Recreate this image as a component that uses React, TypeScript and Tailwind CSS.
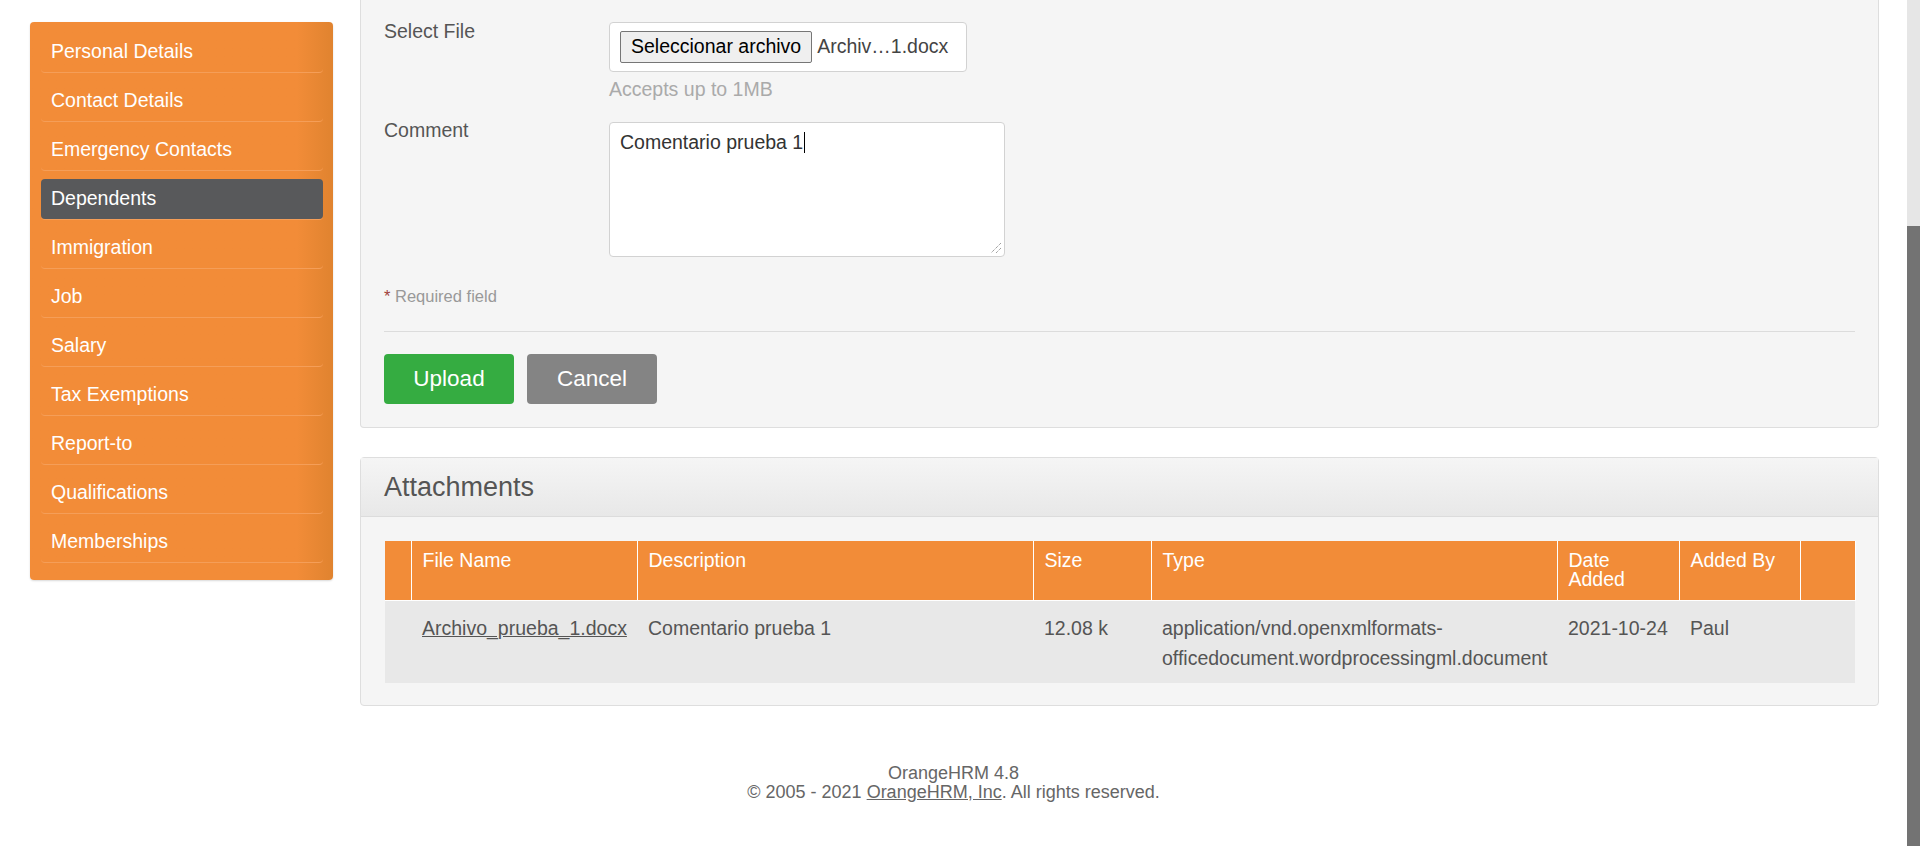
const menu = [
  "Personal Details",
  "Contact Details",
  "Emergency Contacts",
  "Dependents",
  "Immigration",
  "Job",
  "Salary",
  "Tax Exemptions",
  "Report-to",
  "Qualifications",
  "Memberships",
];

function Sidebar() {
  return (
    <aside className="mt-[22px] w-[303px] shrink-0 self-start rounded-[4px] bg-gradient-to-r from-[#f28c38] via-[#f28c38] via-88% to-[#e0832f] pb-[17px] pl-[11px] pr-[10px] pt-[2px] shadow-[0_1px_2px_rgba(0,0,0,0.15)]">
      <ul>
        {menu.map((item) => (
          <li key={item} className="rounded-[4px] border-b border-[#f59e58] pt-[8px]">
            <a
              href="#"
              className={
                item === "Dependents"
                  ? "flex h-[40px] items-center rounded-[4px] bg-[#58595b] px-[10px] text-[19.5px] text-white"
                  : "flex h-[40px] items-center px-[10px] text-[19.5px] text-white"
              }
            >
              {item}
            </a>
          </li>
        ))}
      </ul>
    </aside>
  );
}

function UploadForm() {
  return (
    <section className="rounded-b-[4px] border-x border-b border-[#dedede] bg-[#f5f5f5] px-[23px] pb-[23px] pt-[20px] text-[19.5px] text-[#555]">
      <div className="flex">
        <label className="w-[225px] leading-[22px]">Select File</label>
        <div>
          <div className="mt-[2px] flex h-[50px] w-[358px] items-center rounded-[4px] border border-[#d2d2d2] bg-white pl-[10px]">
            <span className="flex h-[32px] items-center rounded-[2px] border border-[#767676] bg-[#efefef] px-[10px] text-black">
              Seleccionar archivo
            </span>
            <span className="ml-[5px] text-[#444]">Archiv…1.docx</span>
          </div>
          <p className="mt-[6px] leading-[22px] text-[#aaa]">Accepts up to 1MB</p>
        </div>
      </div>

      <div className="mt-[19px] flex">
        <label className="w-[225px] leading-[22px]">Comment</label>
        <div className="relative mt-[3px] h-[135px] w-[396px] rounded-[4px] border border-[#d2d2d2] bg-white px-[10px] pt-[5px] leading-[22px] text-[#333]">
          Comentario prueba 1<span className="ml-[1px] inline-block h-[21px] w-px translate-y-[4px] bg-black" />
          <svg className="absolute bottom-[2px] right-[2px]" width="12" height="12" viewBox="0 0 12 12">
            <path d="M11 1 L1 11 M11 6 L6 11" stroke="#777" strokeWidth="1" strokeDasharray="1 1" />
          </svg>
        </div>
      </div>

      <p className="mt-[30px] text-[16.5px] leading-[19px] text-[#999]">
        <span className="text-[#a0413b]">*</span> Required field
      </p>

      <div className="mt-[25px] border-t border-[#dcdcdc]" />

      <div className="mt-[22px] flex gap-[13px]">
        <button className="h-[50px] w-[130px] rounded-[4px] bg-[#35ac41] text-[22.5px] text-white">Upload</button>
        <button className="h-[50px] w-[130px] rounded-[4px] bg-[#848484] text-[22.5px] text-white">Cancel</button>
      </div>
    </section>
  );
}

function Attachments() {
  const th = "border-b border-r border-white px-[11px] pb-[10px] pt-[10px] text-left align-top font-normal leading-[19px]";
  const td = "px-[11px] pb-[10px] pt-[12px] align-top leading-[30px]";
  return (
    <section className="rounded-[4px] border border-[#dedede] bg-[#f5f5f5]">
      <div className="flex h-[59px] items-center border-b border-[#dcdcdc] bg-gradient-to-b from-[#f5f5f5] to-[#e8e8e8] pl-[23px] text-[27px] text-[#555]">
        Attachments
      </div>
      <div className="pb-[22px] pl-[24px] pr-[23px] pt-[24px]">
        <table className="w-full table-fixed border-collapse text-[19.5px]">
          <colgroup>
            <col className="w-[26px]" />
            <col className="w-[226px]" />
            <col className="w-[396px]" />
            <col className="w-[118px]" />
            <col className="w-[406px]" />
            <col className="w-[122px]" />
            <col className="w-[121px]" />
            <col className="w-[55px]" />
          </colgroup>
          <thead>
            <tr className="h-[59px] bg-[#f28c38] text-white">
              <th className={th}></th>
              <th className={th}>File Name</th>
              <th className={th}>Description</th>
              <th className={th}>Size</th>
              <th className={th}>Type</th>
              <th className={th}>
                Date
                <br />
                Added
              </th>
              <th className={th}>Added By</th>
              <th className={th}></th>
            </tr>
          </thead>
          <tbody>
            <tr className="bg-[#e8e8e8] text-[#555]">
              <td className={td}></td>
              <td className={td}>
                <a href="#" className="underline">
                  Archivo_prueba_1.docx
                </a>
              </td>
              <td className={td}>Comentario prueba 1</td>
              <td className={td}>12.08 k</td>
              <td className={td}>
                application/vnd.openxmlformats-
                <br />
                officedocument.wordprocessingml.document
              </td>
              <td className={td + " whitespace-nowrap"}>2021-10-24</td>
              <td className={td}>Paul</td>
              <td className={td}></td>
            </tr>
          </tbody>
        </table>
      </div>
    </section>
  );
}

export default function App() {
  return (
    <div className="flex h-[846px] overflow-hidden bg-white font-['Liberation_Sans',Arial,sans-serif]">
      <div className="flex min-w-0 flex-1 flex-col">
        <div className="flex gap-[27px] pl-[30px] pr-[28px]">
          <Sidebar />
          <main className="flex min-w-0 flex-1 flex-col gap-[29px]">
            <UploadForm />
            <Attachments />
          </main>
        </div>
        <footer className="mt-[58px] text-center text-[18px] leading-[19px] text-[#666]">
          <p>OrangeHRM 4.8</p>
          <p>
            © 2005 - 2021{" "}
            <a href="#" className="underline">
              OrangeHRM, Inc
            </a>
            . All rights reserved.
          </p>
        </footer>
      </div>
      <div className="flex w-[13px] flex-col bg-[#e6e6e6]">
        <div className="h-[226px]" />
        <div className="flex-1 bg-[#737373]" />
      </div>
    </div>
  );
}
